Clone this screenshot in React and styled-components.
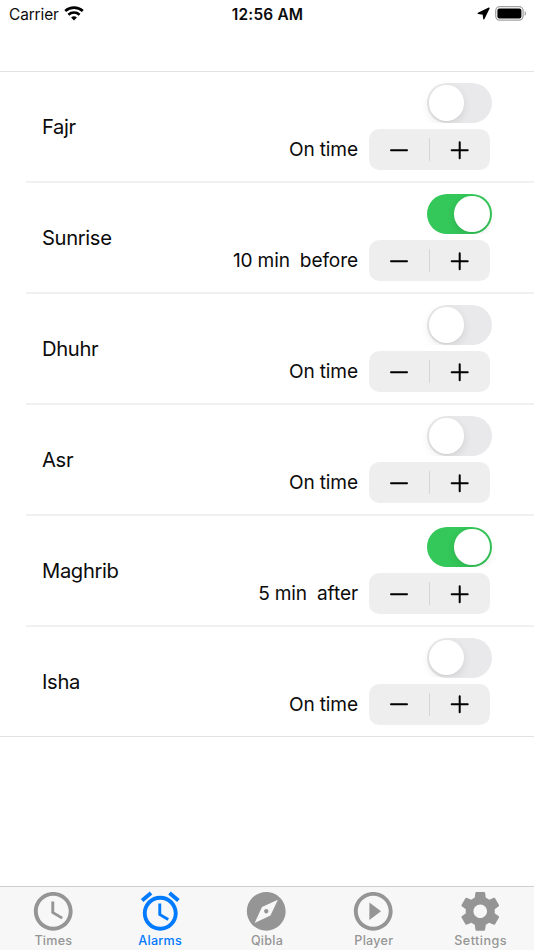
import React from 'react';
import styled, { createGlobalStyle } from 'styled-components';

const GlobalStyle = createGlobalStyle`
  * {
    box-sizing: border-box;
  }

  body {
    margin: 0;
    background: #fff;
    color: #0b0b0b;
    font-family: Inter, "Liberation Sans", sans-serif;
  }
`;

const Screen = styled.div`
  display: flex;
  flex-direction: column;
  width: 534px;
  height: 950px;
  overflow: hidden;
`;

const StatusBar = styled.header`
  display: grid;
  grid-template-columns: 1fr auto 1fr;
  align-items: center;
  height: 27px;
  padding: 0 7px 0 9px;
`;

const StatusGroup = styled.div`
  display: flex;
  align-items: center;
  justify-content: ${({ $end }) => ($end ? 'flex-end' : 'flex-start')};
  gap: 5px;
`;

const Carrier = styled.span`
  padding-top: 1px;
  font-size: 15.4px;
  letter-spacing: -0.1px;
`;

const Clock = styled.span`
  padding: 1px 1px 0 0;
  font-weight: 600;
  font-size: 15.4px;
  letter-spacing: 0.2px;
`;

const AlarmList = styled.ul`
  flex: 1;
  list-style: none;
  margin: 44px 0 0;
  padding: 0;
  border-top: 1px solid #e2e2e3;
`;

const AlarmItem = styled.li`
  padding-left: ${({ $last }) => ($last ? '0' : '26px')};
`;

const AlarmRow = styled.div`
  display: flex;
  align-items: center;
  justify-content: space-between;
  height: ${({ $last }) => ($last ? '110px' : '111px')};
  padding: 11px 42px ${({ $last }) => ($last ? '11px' : '10px')} ${({ $last }) => ($last ? '42px' : '16px')};
  border-bottom: ${({ $last }) => ($last ? '1px solid #e2e2e3' : '2px solid #f0f0f0')};
`;

const AlarmName = styled.span`
  font-size: 20.2px;
  letter-spacing: -0.35px;
  padding-bottom: 1px;
`;

const Controls = styled.div`
  display: flex;
  flex-direction: column;
  align-items: flex-end;
  gap: 6px;
  height: 88px;
`;

const Toggle = styled.button`
  display: flex;
  justify-content: ${({ $on }) => ($on ? 'flex-end' : 'flex-start')};
  width: 65.5px;
  height: 40px;
  padding: 2.3px;
  border: none;
  border-radius: 20px;
  background: ${({ $on }) => ($on ? '#34c759' : '#e9e9eb')};
`;

const Knob = styled.span`
  width: 35.4px;
  height: 35.4px;
  border-radius: 50%;
  background: #fff;
  box-shadow: 0 3px 8px rgba(0, 0, 0, 0.1), 0 1px 1px rgba(0, 0, 0, 0.03);
  clip-path: inset(-2.3px -12px -2.3px -12px);
`;

const OffsetRow = styled.div`
  display: flex;
  align-items: center;
  gap: 11px;
  padding-right: 2px;
`;

const OffsetText = styled.span`
  font-size: 19.1px;
  letter-spacing: -0.1px;
  word-spacing: -0.3px;
  white-space: pre;
  padding-bottom: 1px;
`;

const Stepper = styled.div`
  display: flex;
  align-items: center;
  width: 121px;
  height: 41.4px;
  border-radius: 10.5px;
  background: #eeeeef;
`;

const StepButton = styled.button`
  display: flex;
  flex: 1;
  align-items: center;
  justify-content: center;
  padding: 0;
  border: none;
  background: none;
`;

const StepDivider = styled.span`
  width: 1px;
  height: 23px;
  background: #d5d5d7;
`;

const TabBar = styled.nav`
  display: grid;
  grid-template-columns: repeat(5, 1fr);
  height: 64px;
  border-top: 1px solid #cfcfcf;
  background: #f7f7f7;
`;

const Tab = styled.a`
  display: flex;
  flex-direction: column;
  align-items: center;
  color: ${({ $active }) => ($active ? '#007aff' : '#959595')};
  font-size: 12.6px;
  font-weight: 500;
  letter-spacing: ${({ $tracking }) => $tracking || '0.25px'};
  line-height: 16px;
`;

const TabIcon = styled.svg`
  width: 46.5px;
  height: 46.5px;
  fill: currentColor;
  margin: 0.5px 0.8px -1px 0;
`;

const alarms = [
  { name: 'Fajr', on: false, offset: 'On time' },
  { name: 'Sunrise', on: true, offset: '10 min  before' },
  { name: 'Dhuhr', on: false, offset: 'On time' },
  { name: 'Asr', on: false, offset: 'On time' },
  { name: 'Maghrib', on: true, offset: '5 min  after' },
  { name: 'Isha', on: false, offset: 'On time' },
];

const tabs = [
  {
    label: 'Times',
    path: 'M11.99 2C6.47 2 2 6.48 2 12s4.47 10 9.99 10C17.52 22 22 17.52 22 12S17.52 2 11.99 2zM12 20c-4.42 0-8-3.58-8-8s3.58-8 8-8 8 3.58 8 8-3.58 8-8 8zm.5-13H11v6l5.25 3.15.75-1.23-4.5-2.67z',
  },
  {
    label: 'Alarms',
    active: true,
    path: 'M22 5.72l-4.6-3.86-1.29 1.53 4.6 3.86L22 5.72zM7.88 3.39L6.6 1.86 2 5.71l1.29 1.53 4.59-3.85zM12.5 8H11v6l4.75 2.85.75-1.23-4-2.37V8zM12 4c-4.97 0-9 4.03-9 9s4.02 9 9 9c4.97 0 9-4.03 9-9s-4.03-9-9-9zm0 16c-3.87 0-7-3.13-7-7s3.13-7 7-7 7 3.13 7 7-3.13 7-7 7z',
  },
  {
    label: 'Qibla',
    path: 'M12 10.9c-.61 0-1.1.49-1.1 1.1s.49 1.1 1.1 1.1c.61 0 1.1-.49 1.1-1.1s-.49-1.1-1.1-1.1zM12 2C6.48 2 2 6.48 2 12s4.48 10 10 10 10-4.48 10-10S17.52 2 12 2zm2.19 12.19L6 18l3.81-8.19L18 6l-3.81 8.19z',
  },
  {
    label: 'Player',
    path: 'M10 16.5l6-4.5-6-4.5v9zM12 2C6.48 2 2 6.48 2 12s4.48 10 10 10 10-4.48 10-10S17.52 2 12 2zm0 18c-4.41 0-8-3.59-8-8s3.59-8 8-8 8 3.59 8 8-3.59 8-8 8z',
  },
  {
    label: 'Settings',
    tracking: '0.45px',
    path: 'M19.43 12.98c.04-.32.07-.64.07-.98s-.03-.66-.07-.98l2.11-1.65c.19-.15.24-.42.12-.64l-2-3.46c-.12-.22-.39-.3-.61-.22l-2.49 1c-.52-.4-1.08-.73-1.69-.98l-.38-2.65C14.46 2.18 14.25 2 14 2h-4c-.25 0-.46.18-.49.42l-.38 2.65c-.61.25-1.17.59-1.69.98l-2.49-1c-.23-.09-.49 0-.61.22l-2 3.46c-.13.22-.07.49.12.64l2.11 1.65c-.04.32-.07.65-.07.98s.03.66.07.98l-2.11 1.65c-.19.15-.24.42-.12.64l2 3.46c.12.22.39.3.61.22l2.49-1c.52.4 1.08.73 1.69.98l.38 2.65c.03.24.24.42.49.42h4c.25 0 .46-.18.49-.42l.38-2.65c.61-.25 1.17-.59 1.69-.98l2.49 1c.23.09.49 0 .61-.22l2-3.46c.12-.22.07-.49-.12-.64l-2.11-1.65zM12 15.5c-1.93 0-3.5-1.57-3.5-3.5s1.57-3.5 3.5-3.5 3.5 1.57 3.5 3.5-1.57 3.5-3.5 3.5z',
  },
];

const WifiIcon = () => (
  <svg width="20" height="16" viewBox="0 0 20 16" fill="none" stroke="#000" strokeWidth="2.6">
    <path d="M1.2 5a13.2 13.2 0 0 1 17.6 0" />
    <path d="M4.4 8.7a8.4 8.4 0 0 1 11.2 0" />
    <path d="M10 14.4l-2.9-2.8a4.3 4.3 0 0 1 5.8 0z" fill="#000" stroke="none" />
  </svg>
);

const LocationIcon = () => (
  <svg width="13" height="13" viewBox="0 0 13 13">
    <path d="M12 1.2L6.9 11.8 6.2 7 1.2 6.4z" fill="#000" stroke="#000" strokeWidth="1.3" strokeLinejoin="round" />
  </svg>
);

const BatteryIcon = () => (
  <svg width="32" height="15" viewBox="0 0 32 15">
    <rect x=".7" y=".7" width="27.4" height="13.4" rx="4" fill="none" stroke="#a2a2a2" strokeWidth="1.3" />
    <rect x="2.4" y="2.5" width="24" height="9.9" rx="2" fill="#000" />
    <path d="M29.6 5.2c1.9.6 1.9 4 0 4.6z" fill="#a2a2a2" />
  </svg>
);

const MinusIcon = () => (
  <svg width="20" height="20" viewBox="0 0 20 20" stroke="#000" strokeWidth="2" strokeLinecap="round">
    <path d="M2 10.2h16" />
  </svg>
);

const PlusIcon = () => (
  <svg width="20" height="20" viewBox="0 0 20 20" stroke="#000" strokeWidth="2" strokeLinecap="round">
    <path d="M1.7 10.2h16M9.7 2.2v16" />
  </svg>
);

const Alarm = ({ alarm, last }) => (
  <AlarmItem $last={last}>
    <AlarmRow $last={last}>
      <AlarmName>{alarm.name}</AlarmName>
      <Controls>
        <Toggle $on={alarm.on} role="switch" aria-checked={alarm.on} aria-label={alarm.name}>
          <Knob />
        </Toggle>
        <OffsetRow>
          <OffsetText>{alarm.offset}</OffsetText>
          <Stepper>
            <StepButton aria-label="Earlier"><MinusIcon /></StepButton>
            <StepDivider />
            <StepButton aria-label="Later"><PlusIcon /></StepButton>
          </Stepper>
        </OffsetRow>
      </Controls>
    </AlarmRow>
  </AlarmItem>
);

const App = () => (
  <Screen>
    <GlobalStyle />
    <StatusBar>
      <StatusGroup>
        <Carrier>Carrier</Carrier>
        <WifiIcon />
      </StatusGroup>
      <Clock>12:56 AM</Clock>
      <StatusGroup $end>
        <LocationIcon />
        <BatteryIcon />
      </StatusGroup>
    </StatusBar>
    <AlarmList>
      {alarms.map((alarm, index) => (
        <Alarm key={alarm.name} alarm={alarm} last={index === alarms.length - 1} />
      ))}
    </AlarmList>
    <TabBar>
      {tabs.map((tab) => (
        <Tab key={tab.label} $active={tab.active} $tracking={tab.tracking}>
          <TabIcon viewBox="0 0 24 24"><path d={tab.path} /></TabIcon>
          {tab.label}
        </Tab>
      ))}
    </TabBar>
  </Screen>
);

export default App;
